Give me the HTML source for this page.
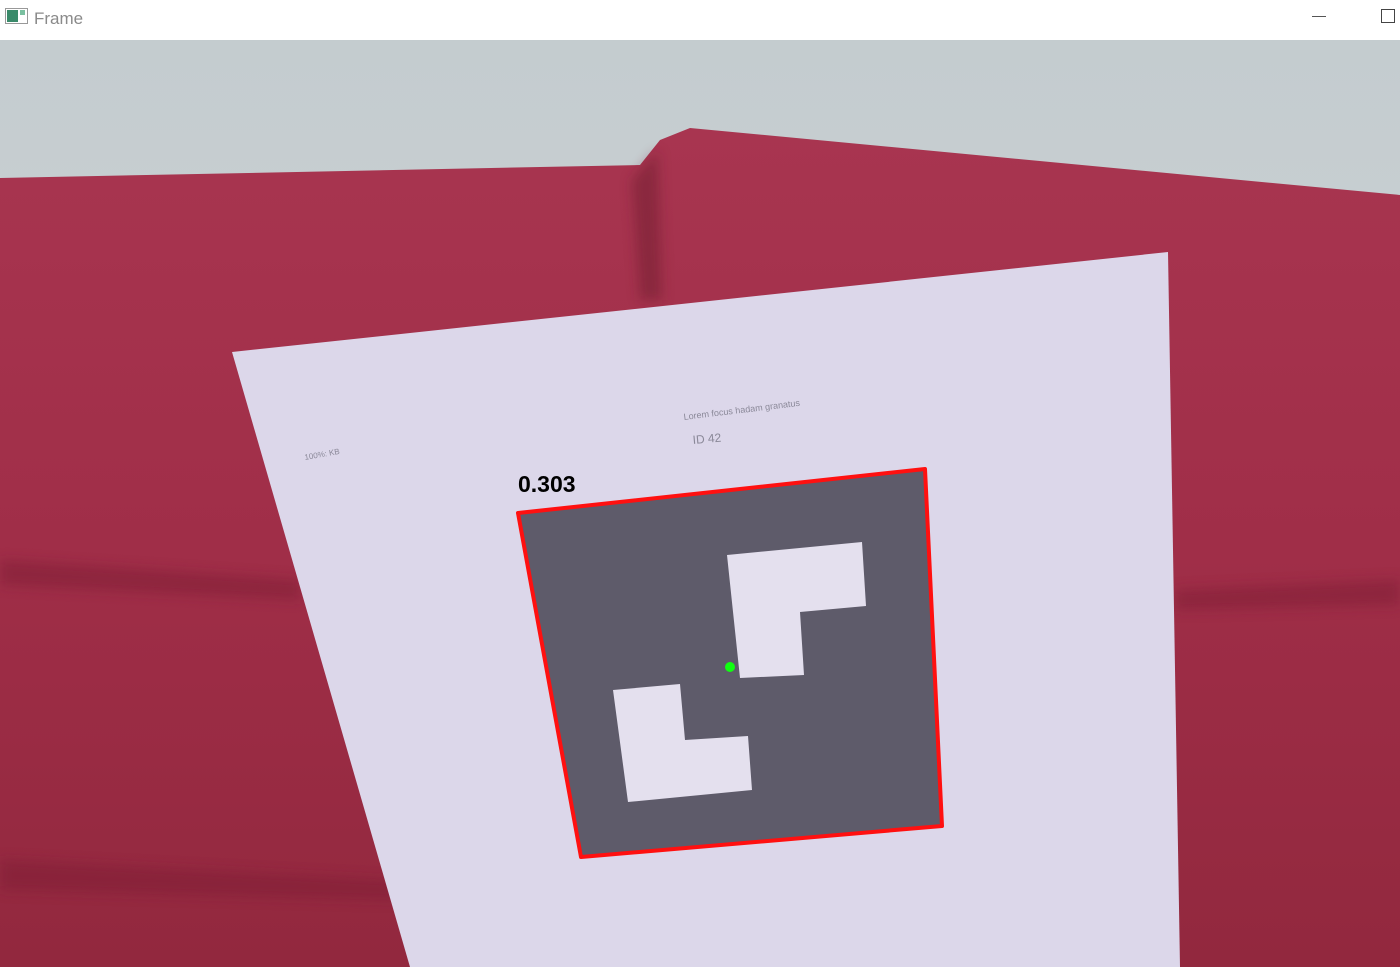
<!DOCTYPE html>
<html><head><style>
body{margin:0;width:1400px;height:967px;overflow:hidden;background:#fff;font-family:"Liberation Sans",sans-serif}
.tb{position:absolute;left:0;top:0;width:1400px;height:40px;background:#fff}
</style></head><body>
<div class="tb">
<svg width="1400" height="40" style="position:absolute;left:0;top:0">
<rect x="5.5" y="8.5" width="22" height="15" fill="#fff" stroke="#999"/>
<rect x="7" y="10" width="11" height="12" fill="#3a8a6a"/>
<rect x="20" y="10" width="5" height="5" fill="#7ac0a0"/>
<text x="34" y="24" font-size="17" fill="#8a8a8a" font-family="Liberation Sans, sans-serif">Frame</text>
<line x1="1312" y1="16.5" x2="1326" y2="16.5" stroke="#555"/>
<rect x="1381.5" y="9.5" width="13" height="13" fill="none" stroke="#444"/>
</svg>
</div>
<svg width="1400" height="927" viewBox="0 40 1400 927" style="position:absolute;left:0;top:40px">
<defs>
<linearGradient id="wall" x1="0" y1="0" x2="0" y2="1"><stop offset="0" stop-color="#c4cccf"/><stop offset="1" stop-color="#d3d6da"/></linearGradient>
<linearGradient id="couch" x1="0" y1="0" x2="0" y2="1"><stop offset="0" stop-color="#a83550"/><stop offset="0.5" stop-color="#a02e48"/><stop offset="1" stop-color="#92283e"/></linearGradient>
<filter id="bl"><feGaussianBlur stdDeviation="6"/></filter>
</defs>
<rect x="0" y="40" width="1400" height="927" fill="url(#wall)"/>
<path d="M0 178 L640 165 L660 140 L690 128 L1400 195 L1400 967 L0 967 Z" fill="url(#couch)"/>
<g filter="url(#bl)" opacity="0.5">
<path d="M0 560 L300 580 L300 600 L0 585 Z" fill="#7e1e34"/>
<path d="M1175 590 L1400 580 L1400 605 L1175 610 Z" fill="#7e1e34"/>
<path d="M632 180 L658 150 L662 300 L640 300 Z" fill="#6e1a2e"/>
<path d="M0 860 L390 880 L400 900 L0 890 Z" fill="#7e1e34"/>
</g>
<path d="M232 352 L1168 252 L1180 967 L410 967 Z" fill="#dcd7ea"/>
<text x="684" y="420" font-size="9" fill="#8a8898" transform="rotate(-7 684 420)">Lorem focus hadam granatus</text>
<text x="693" y="444" font-size="12" fill="#8a8898" transform="rotate(-5 693 444)">ID 42</text>
<text x="305" y="460" font-size="8" fill="#8a8898" transform="rotate(-10 305 460)">100%: KB</text>
<path d="M518 513 L925 469 L942 826 L581 857 Z" fill="#5e5b6a" stroke="#ff1010" stroke-width="4" stroke-linejoin="round"/>
<path d="M727 555 L862 542 L866 606 L800 612 L804 675 L740 678 Z" fill="#e4e0ee"/>
<path d="M613 690 L680 684 L685 740 L748 736 L752 790 L628 802 Z" fill="#e4e0ee"/>
<circle cx="730" cy="667" r="5" fill="#10ff10"/>
<text x="518" y="492" font-size="23" font-weight="bold" fill="#000" font-family="Liberation Sans, sans-serif">0.303</text>
</svg>
</body></html>
